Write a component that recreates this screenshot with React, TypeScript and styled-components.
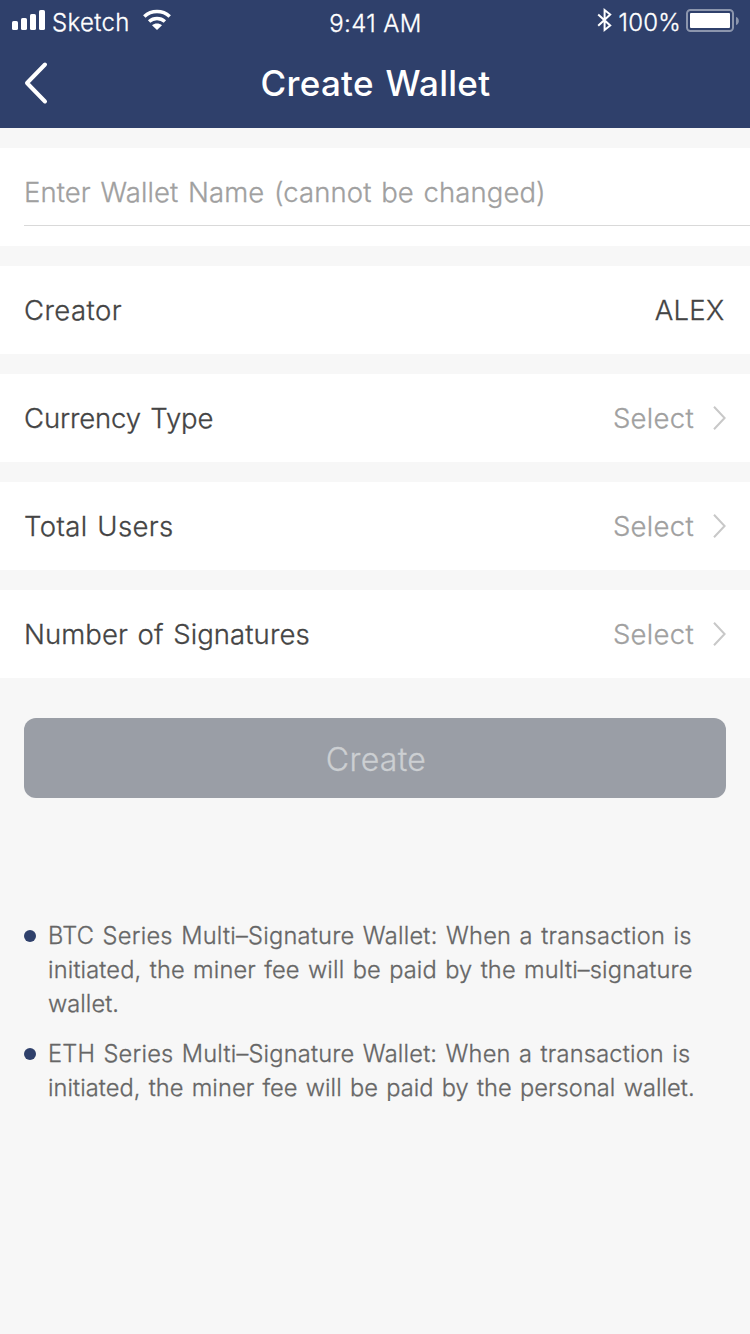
import React from "react";
import styled, { createGlobalStyle } from "styled-components";

const GlobalStyle = createGlobalStyle`
  * { box-sizing: border-box; }
  body {
    margin: 0;
    background: #f7f7f7;
    font-family: Inter, "Noto Sans CJK SC", sans-serif;
    font-weight: 300;
    -webkit-text-stroke: 0.3px;
    color: #444;
  }
`;

const Screen = styled.div`
  min-height: 1334px;
  background: #f7f7f7;
`;

const Header = styled.header`
  height: 128px;
  background: #2f406b;
  color: #fff;
`;

const StatusBar = styled.div`
  display: grid;
  grid-template-columns: 1fr auto 1fr;
  height: 40px;
  padding: 0 11px 0 12px;
  font-size: 24px;
  line-height: 46px;
`;

const StatusGroup = styled.div<{ $end?: boolean }>`
  display: flex;
  justify-content: ${(p) => (p.$end ? "flex-end" : "flex-start")};
  svg { display: block; flex: none; }
`;

const Carrier = styled.span`
  margin: 0 13px 0 7px;
  letter-spacing: 0.35px;
`;

const Clock = styled.span`
  line-height: 47px;
  letter-spacing: 0.4px;
`;

const Charge = styled.span`
  margin: 0 5px 0 7px;
  letter-spacing: 0.2px;
`;

const NavBar = styled.div`
  display: grid;
  grid-template-columns: 100px 1fr 100px;
  align-items: center;
  height: 88px;
`;

const BackButton = styled.button`
  height: 88px;
  padding: 0 0 2px 24px;
  border: 0;
  background: none;
  color: inherit;
  svg { display: block; }
`;

const Title = styled.h1`
  margin: 0 0 0 1px;
  padding-bottom: 2px;
  font-size: 35px;
  line-height: 86px;
  font-weight: 500;
  letter-spacing: 0.3px;
  word-spacing: 2px;
  text-align: center;
  -webkit-text-stroke: 0;
`;

const Form = styled.main`
  display: flex;
  flex-direction: column;
  gap: 20px;
  padding-top: 20px;
`;

const NameField = styled.div`
  height: 98px;
  padding-left: 24px;
  background: #fff;
`;

const NameInput = styled.input`
  display: block;
  width: 100%;
  height: 78px;
  padding: 11px 0 0;
  border: 0;
  border-bottom: 1px solid #d9d9d9;
  outline: 0;
  background: none;
  font: inherit;
  font-size: 27.5px;
  letter-spacing: 0.1px;
  word-spacing: 1.8px;
  color: #444;
  &::placeholder { color: #a0a0a0; opacity: 1; }
`;

const FieldRow = styled.div`
  display: flex;
  align-items: center;
  height: 88px;
  padding: 0 24px;
  background: #fff;
  font-size: 27.5px;
  line-height: 88px;
`;

const Label = styled.span<{ $track: number }>`
  flex: 1;
  letter-spacing: ${(p) => p.$track}px;
  word-spacing: 1.8px;
`;

const Value = styled.span<{ $muted?: boolean }>`
  margin-right: ${(p) => (p.$muted ? 19 : 1.5)}px;
  letter-spacing: 0.3px;
  color: ${(p) => (p.$muted ? "#a0a0a0" : "#444")};
`;

const CreateButton = styled.button`
  height: 80px;
  margin: 20px 24px 0;
  padding: 2px 0 0 2px;
  border: 0;
  border-radius: 12px;
  background: #9a9ea6;
  color: #cccfd2;
  font: inherit;
  font-size: 32px;
  letter-spacing: 0.3px;
`;

const Notes = styled.ul`
  display: flex;
  flex-direction: column;
  gap: 16px;
  margin: 121px 0 0;
  padding: 0 48px 0 24px;
  list-style: none;
`;

const Note = styled.li`
  display: flex;
  gap: 12px;
  font-size: 23.6px;
  line-height: 34px;
  word-spacing: 1.5px;
  color: #666;
  &::before {
    content: "";
    flex: none;
    width: 12px;
    height: 12px;
    margin-top: 11px;
    border-radius: 50%;
    background: #2f406b;
  }
`;

const NoteText = styled.p`
  margin: 0;
`;

const NoteLine = styled.span<{ $track: number }>`
  display: block;
  white-space: nowrap;
  letter-spacing: ${(p) => p.$track}px;
`;

const SignalIcon = () => (
  <svg width="33" height="40" viewBox="0 0 33 40" fill="currentColor">
    <rect x="0" y="21" width="6" height="9" rx="1.6" />
    <rect x="9" y="18" width="6" height="12" rx="1.6" />
    <rect x="18" y="14" width="6" height="16" rx="1.6" />
    <rect x="27" y="10" width="6" height="20" rx="1.6" />
  </svg>
);

const WifiIcon = () => (
  <svg width="28" height="40" viewBox="0 0 28 40" fill="none" stroke="currentColor">
    <path d="M1.3 16.5C8.5 9.9 19.5 9.9 26.7 16.5" strokeWidth="3.6" />
    <path d="M6.1 21.5C10.6 17.5 17.4 17.5 21.9 21.5" strokeWidth="3.5" />
    <path d="M9 25.3C11.8 22.9 16.2 22.9 19 25.3L14 30Z" fill="currentColor" stroke="none" />
  </svg>
);

const BluetoothIcon = () => (
  <svg width="15" height="40" viewBox="0 0 15 40" fill="none" stroke="currentColor" strokeWidth="2">
    <path d="M1.2 14.6L13.2 25.4L7.6 30V10L13.2 14.6L1.2 25.8" />
  </svg>
);

const BatteryIcon = () => (
  <svg width="53" height="40" viewBox="0 0 53 40">
    <rect x="1" y="10" width="46" height="21" rx="3.5" fill="none" stroke="#fff" strokeOpacity=".45" strokeWidth="2" />
    <rect x="4" y="13" width="40" height="15" rx="1" fill="#fff" />
    <path d="M50 17C53.8 18 53.8 24 50 25Z" fill="#fff" fillOpacity=".45" />
  </svg>
);

const BackIcon = () => (
  <svg width="24" height="44" viewBox="0 0 24 44" fill="none" stroke="currentColor" strokeWidth="4" strokeLinecap="round" strokeLinejoin="round">
    <path d="M21 3.5L3 22L21 40.5" />
  </svg>
);

const ChevronIcon = () => (
  <svg width="13" height="26" viewBox="0 0 13 26" fill="none" stroke="#c8c8c8" strokeWidth="2">
    <path d="M1 1.7L11.6 13L1 24.3" />
  </svg>
);

const selects = [
  { label: "Currency Type", track: -0.14 },
  { label: "Total Users", track: 0.38 },
  { label: "Number of Signatures", track: 0.09 },
];

const notes = [
  [
    { text: "BTC Series Multi–Signature Wallet: When a transaction is", track: 0.25 },
    { text: "initiated, the miner fee will be paid by the multi–signature", track: 0.16 },
    { text: "wallet.", track: 0.05 },
  ],
  [
    { text: "ETH Series Multi–Signature Wallet: When a transaction is", track: 0.21 },
    { text: "initiated, the miner fee will be paid by the personal wallet.", track: 0.07 },
  ],
];

export default function App() {
  return (
    <Screen>
      <GlobalStyle />
      <Header>
        <StatusBar>
          <StatusGroup>
            <SignalIcon />
            <Carrier>Sketch</Carrier>
            <WifiIcon />
          </StatusGroup>
          <Clock>9:41 AM</Clock>
          <StatusGroup $end>
            <BluetoothIcon />
            <Charge>100%</Charge>
            <BatteryIcon />
          </StatusGroup>
        </StatusBar>
        <NavBar>
          <BackButton aria-label="Back">
            <BackIcon />
          </BackButton>
          <Title>Create Wallet</Title>
        </NavBar>
      </Header>
      <Form>
        <NameField>
          <NameInput placeholder="Enter Wallet Name (cannot be changed)" />
        </NameField>
        <FieldRow>
          <Label $track={0.45}>Creator</Label>
          <Value>ALEX</Value>
        </FieldRow>
        {selects.map((s) => (
          <FieldRow key={s.label}>
            <Label $track={s.track}>{s.label}</Label>
            <Value $muted>Select</Value>
            <ChevronIcon />
          </FieldRow>
        ))}
        <CreateButton>Create</CreateButton>
      </Form>
      <Notes>
        {notes.map((lines) => (
          <Note key={lines[0].text}>
            <NoteText>
              {lines.map((line) => (
                <NoteLine key={line.text} $track={line.track}>{line.text}</NoteLine>
              ))}
            </NoteText>
          </Note>
        ))}
      </Notes>
    </Screen>
  );
}
